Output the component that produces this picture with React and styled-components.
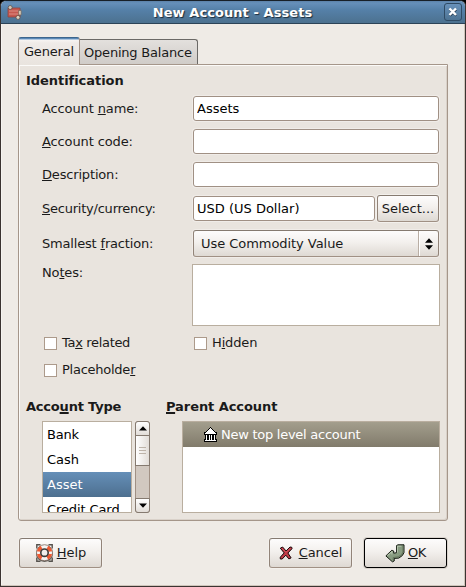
import React from 'react';
import styled, { createGlobalStyle, css } from 'styled-components';

const Global = createGlobalStyle`
  *, *::before, *::after { box-sizing: border-box; }
  html, body { margin: 0; padding: 0; background: #000; overflow: hidden; }
  body { font: 13px/16px "DejaVu Sans", sans-serif; color: #1a1a1a; }
  button, input, textarea { font: inherit; color: inherit; margin: 0; outline: none; }
`;

const Window = styled.main`
  width: 466px;
  height: 587px;
  display: flex;
  flex-direction: column;
  background: #efebe6;
  border: 1px solid #3b3331;
  border-top-color: #182028;
  border-radius: 6px 6px 0 0;
  box-shadow: inset -1px -1px 0 #cfc5bb, inset 1px 0 0 #f6f4f1;
  overflow: hidden;
`;

const TitleBar = styled.header`
  flex: none;
  height: 23px;
  display: grid;
  grid-template-columns: 26px 1fr 22px;
  align-items: center;
  padding: 0 3px 0 6px;
  background: linear-gradient(#5b81a9 0, #6690ba 2px, #5580a8 9px, #4c718f 100%);
  border-bottom: 1px solid #2c4357;
`;

const Title = styled.h1`
  margin: 0 6px 0 -2px;
  text-align: center;
  font-size: 13px;
  line-height: 16px;
  letter-spacing: 0.07px;
  color: #fff;
  text-shadow: 1px 1px 1px #1b2c3b;
  transform: translateY(1px);
`;

const CloseButton = styled.button`
  width: 18px;
  height: 18px;
  justify-self: end;
  display: grid;
  place-items: center;
  padding: 0;
  background: linear-gradient(#6891ba, #4d7393);
  border: 1px solid #2f4b65;
  border-radius: 3px;
`;

const Body = styled.div`
  flex: 1;
  padding: 12px 17px 0;
`;

const TabList = styled.div`
  display: flex;
  align-items: flex-end;
  height: 28px;
`;

const Tab = styled.button`
  display: block;
  white-space: nowrap;
  line-height: 16px;
  border: 1px solid #726b66;
  text-align: left;
  letter-spacing: -0.2px;
  ${p => p.$active ? css`
    position: relative;
    width: 62px;
    height: 28px;
    margin-bottom: -1px;
    padding: 1px 0 0 5px;
    background: linear-gradient(#4b76a1 0, #6a9bcc 1px, #f7f4f2 2px, #efebe8 5px, #e9e4de 100%);
    border-color: #3d668d #a09084 transparent #a09084;
    border-bottom: 0;
    border-radius: 3px 3px 0 0;
  ` : css`
    width: 119px;
    height: 25px;
    padding: 2px 0 0 4px;
    margin-left: -1px;
    background: linear-gradient(#e3e0dd, #d0ccc8);
    border-bottom: 0;
    border-radius: 0 3px 0 0;
    border-color: #6b6966;
  `}
`;

const Panel = styled.section`
  width: 430px;
  height: 457px;
  padding: 8px 7px 0;
  background: #e9e4de;
  border: 1px solid #a5968a;
  border-radius: 0 0 3px 3px;
  box-shadow: inset 1px 1px 0 #fbfaf8, inset -1px -1px 0 #d9d1c9;
`;

const Heading = styled.h2`
  margin: 0;
  font-size: 13px;
  line-height: 16px;
  letter-spacing: ${p => p.$spacing || 0}px;
  white-space: nowrap;
`;

const Key = styled.u`
  text-decoration: underline;
  text-decoration-thickness: ${p => p.$thick ? '2px' : '1px'};
  text-underline-offset: 1px;
  text-decoration-skip-ink: none;
`;

const Form = styled.div`
  display: flex;
  flex-direction: column;
  padding: 7px 0 0 16px;
`;

const FormRow = styled.div`
  display: grid;
  grid-template-columns: 151px 246px;
  align-items: ${p => p.$top ? 'start' : 'center'};
  height: ${p => p.$height || 25}px;
  margin-bottom: ${p => p.$gap || 0}px;
`;

const Label = styled.label`
  white-space: nowrap;
  letter-spacing: ${p => p.$spacing || 0}px;
  padding-top: ${p => p.$drop ? 1 : 0}px;
`;

const field = css`
  border: 1px solid #a09084;
  border-radius: 3px;
`;

const Entry = styled.input`
  ${field}
  width: 100%;
  min-width: 0;
  height: 25px;
  padding: 0 3px;
  background: #fff;
  box-shadow: 0 0 0 1px #f0ece8;
  color: #000;
`;

const CurrencyGroup = styled.div`
  display: grid;
  grid-template-columns: 182px 62px;
  gap: 2px;
  align-items: center;
`;

const Button = styled.button`
  ${field}
  display: flex;
  align-items: center;
  justify-content: center;
  gap: ${p => p.$gap || 0}px;
  width: ${p => p.$width}px;
  height: ${p => p.$height || 30}px;
  padding: 0;
  white-space: nowrap;
  letter-spacing: ${p => p.$spacing || 0}px;
  border-color: ${p => p.$default ? '#000' : '#857a70 #928479 #a09084'};
  background: linear-gradient(#fdfcfc 0, #f3f0ed 45%, #ded9d3 100%);
  box-shadow: ${p => p.$default ? '0 0 0 1px #d9d3cc' : '0 0 0 1px #f3f0ec'};
`;

const Combo = styled.button`
  ${field}
  display: grid;
  grid-template-columns: 1fr 20px;
  align-items: stretch;
  width: 246px;
  height: 27px;
  padding: 0;
  line-height: 25px;
  text-align: left;
  letter-spacing: -0.05px;
  border-color: #857a70 #928479 #a09084;
  background: linear-gradient(#fdfcfc 0, #f3f0ed 45%, #ded9d3 100%);
  box-shadow: 0 0 0 1px #f0ece8;
`;

const ComboText = styled.span`
  padding-left: 7px;
`;

const ComboArrows = styled.span`
  display: grid;
  place-items: center;
  border-left: 1px solid #b9aea4;
  box-shadow: inset 1px 0 0 #fff;
`;

const Notes = styled.textarea`
  display: block;
  width: 248px;
  height: 62px;
  margin-left: -1px;
  padding: 2px;
  resize: none;
  background: #fff;
  border: 1px solid #b9ae9f;
`;

const CheckGrid = styled.div`
  display: grid;
  grid-template-columns: 150px auto;
  row-gap: 11px;
  padding-left: 2px;
`;

const Check = styled.label`
  display: flex;
  align-items: center;
  gap: 5px;
  height: 16px;
  letter-spacing: ${p => p.$spacing || 0}px;
`;

const Box = styled.input`
  appearance: none;
  width: 13px;
  height: 13px;
  background: #fff;
  border: 1px solid #ac9a8b;
`;

const Pickers = styled.div`
  display: grid;
  grid-template-columns: 140px 274px;
  margin-top: 21px;
`;

const ListArea = styled.div`
  display: flex;
  gap: 3px;
  padding: 6px 0 0 16px;
`;

const List = styled.ul`
  width: ${p => p.$width}px;
  height: 92px;
  margin: 0;
  padding: 0;
  overflow: hidden;
  list-style: none;
  background: #fff;
  border: 1px solid #b9ae9f;
`;

const Item = styled.li`
  display: flex;
  align-items: center;
  gap: 4px;
  height: 25px;
  padding-left: ${p => p.$indent || 4}px;
  white-space: nowrap;
  letter-spacing: ${p => p.$spacing || 0}px;
  color: ${p => p.$tone ? '#fff' : '#000'};
  background: ${p => p.$tone === 'blue' ? 'linear-gradient(#658fb8, #4d6f8f)'
    : p.$tone === 'olive' ? 'linear-gradient(#a39e8d, #817b6b)' : 'none'};
`;

const ScrollBar = styled.div`
  display: flex;
  flex-direction: column;
  width: 15px;
  height: 92px;
  background: #d1c8c0;
  border: 1px solid #a09084;
  border-radius: 3px;
`;

const ScrollPart = styled.div`
  display: grid;
  place-items: center;
  height: ${p => p.$height}px;
  margin: ${p => p.$end ? 'auto -1px -1px' : '-1px -1px 0'};
  border: 1px solid #857a70;
  border-radius: ${p => p.$end ? '0 0 3px 3px' : p.$start ? '3px 3px 0 0' : '0'};
  background: linear-gradient(${p => p.$thumb ? '90deg, ' : ''}#fff, #e2ddd8);
`;

const Actions = styled.footer`
  display: flex;
  width: 428px;
  margin: 17px 0 0 1px;
  gap: 12px;
`;

const Spacer = styled.div`
  flex: 1;
`;

const Svg = ({ w, h, children, crisp }) => (
  <svg width={w} height={h} viewBox={`0 0 ${w} ${h}`} shapeRendering={crisp ? 'crispEdges' : 'auto'}>
    {children}
  </svg>
);

const AppIcon = () => (
  <Svg w={15} h={15}>
    <path d="M1 3h12v9H1z" fill="#c65850" stroke="#93443d" strokeWidth=".8" />
    <path d="M2 6h9M2 9h9" stroke="#dc8b80" />
    <circle cx="3.2" cy="2.5" r="2" fill="#d6c6b6" stroke="#594b42" strokeWidth=".7" />
    <circle cx="11" cy="12.4" r="2" fill="#ded2c2" stroke="#594b42" strokeWidth=".7" />
    <path d="M11.6 5.5h2.6v4.4h-2.6z" fill="#d8ccba" stroke="#706052" strokeWidth=".6" />
  </Svg>
);

const CloseIcon = () => (
  <Svg w={10} h={10}>
    <path d="M2 2.5l6.2 6.2M8.2 2.5L2 8.7" stroke="#24394c" strokeWidth="2.2" />
    <path d="M1.5 1.5l6.5 6.5M8 1.5L1.5 8" stroke="#fff" strokeWidth="2.4" />
  </Svg>
);

const ArrowsIcon = () => (
  <Svg w={8} h={12}>
    <path d="M0 4.7L4 .2l4 4.5zM0 7.2h8L4 11.7z" fill="#000" />
  </Svg>
);

const Arrow = ({ down }) => (
  <Svg w={8} h={5}>
    <path d={down ? 'M0 .5h8L4 4.7z' : 'M0 4.5h8L4 .3z'} fill="#000" />
  </Svg>
);

const Grip = () => (
  <Svg w={7} h={8} crisp>
    <path d="M0 .5h7M0 3.5h7M0 6.5h7" stroke="#bdb3a9" />
  </Svg>
);

const BankIcon = () => (
  <Svg w={13} h={15} crisp>
    <path d="M6 0h1v1h1v1h1v1h1v1h1v1h2v3h-1v4h1v3H0v-3h1V8H0V5h2V4h1V3h1V2h1V1h1z" fill="#000" />
    <path d="M6 1h1v1h1v1h1v1h1v1h1v1H2V5h1V4h1V3h1V2h1z" fill="#fff" />
    <path d="M1 6.5h11M1 13.5h11" stroke="#fff" />
    <path d="M2.5 8v5M5.5 8v5M7.5 8v5M10.5 8v5" stroke="#fff" />
  </Svg>
);

const HelpIcon = () => (
  <Svg w={19} h={20}>
    <path d="M1.8 5.5V1.8h3.7M13.5 1.8h3.7v3.7M1.8 14.5v3.7h3.7M13.5 18.2h3.7v-3.7" fill="none" stroke="#55524d" strokeWidth="1.4" />
    <circle cx="9.5" cy="10.4" r="8.5" fill="#5d5954" />
    <circle cx="9.5" cy="9.7" r="8" fill="#f6f4f2" stroke="#7d6a60" strokeWidth=".8" />
    <g fill="none" stroke="#ee5a33" strokeWidth="3.6">
      <path d="M3.6 8.5A6 6 0 0 1 6.6 4.4M12.4 4.4a6 6 0 0 1 3 4.1M15.4 11a6 6 0 0 1-3 4.1M6.6 15.1a6 6 0 0 1-3-4.1" />
    </g>
    <circle cx="9.5" cy="9.7" r="3.7" fill="#f1eeeb" stroke="#3e3b38" strokeWidth="1.6" />
  </Svg>
);

const CancelIcon = () => (
  <Svg w={14} h={14}>
    <path d="M1.3 2.2L3.6 1l3.5 4L11 1l1.8.3.2 1.4L8.9 7l3.2 4.9-2.2 1-3.1-3.7L3.2 13H1.3v-1.8l3.9-4.3z" fill="#c13a46" stroke="#160406" strokeWidth="1" />
    <path d="M3.2 2.4l3.6 4.2M11.3 2.2L7.5 6" stroke="#d9606b" strokeWidth=".7" fill="none" />
  </Svg>
);

const OkIcon = () => (
  <Svg w={20} h={19}>
    <path d="M11.5 1.6L13 .8h6v7.7l-1.6 3-3.6 2.6-4.6.3v2.6l-1.8.8L.9 11.9l6-5.7 1.8.8v2.2l2.8-.5z" fill="#879b80" stroke="#11170f" strokeWidth="1" strokeLinejoin="round" />
    <path d="M12.4 8.6V2.3h4M2.4 11.7l4.5-4v2.8" fill="none" stroke="#b3c2aa" strokeWidth="1.1" />
    <path d="M18 2v6l-1.5 2.7-3.3 2.2-5 .6v2.8" fill="none" stroke="#61735a" strokeWidth="1" />
  </Svg>
);

export default function App() {
  return (
    <>
      <Global />
      <Window>
        <TitleBar>
          <AppIcon />
          <Title>New Account - Assets</Title>
          <CloseButton aria-label="Close"><CloseIcon /></CloseButton>
        </TitleBar>
        <Body>
          <TabList role="tablist">
            <Tab $active role="tab">General</Tab>
            <Tab role="tab">Opening Balance</Tab>
          </TabList>
          <Panel>
            <Heading $spacing={-0.05}>Identification</Heading>
            <Form>
              <FormRow $gap={8}>
                <Label $spacing={-0.12}>Account <Key>n</Key>ame:</Label>
                <Entry defaultValue="Assets" />
              </FormRow>
              <FormRow $gap={8}>
                <Label $spacing={-0.12}><Key>A</Key>ccount code:</Label>
                <Entry />
              </FormRow>
              <FormRow $gap={8}>
                <Label $spacing={-0.17}><Key>D</Key>escription:</Label>
                <Entry />
              </FormRow>
              <FormRow $height={27} $gap={8}>
                <Label $spacing={-0.23}><Key>S</Key>ecurity/currency:</Label>
                <CurrencyGroup>
                  <Entry defaultValue="USD (US Dollar)" />
                  <Button $width={62} $height={27}>Select...</Button>
                </CurrencyGroup>
              </FormRow>
              <FormRow $height={27} $gap={7}>
                <Label $spacing={-0.18}>Smallest <Key>f</Key>raction:</Label>
                <Combo>
                  <ComboText>Use Commodity Value</ComboText>
                  <ComboArrows><ArrowsIcon /></ComboArrows>
                </Combo>
              </FormRow>
              <FormRow $top $height={62} $gap={9}>
                <Label $drop $spacing={-0.15}>No<Key>t</Key>es:</Label>
                <Notes />
              </FormRow>
              <CheckGrid>
                <Check $spacing={-0.32}><Box type="checkbox" /><span>Ta<Key>x</Key> related</span></Check>
                <Check $spacing={-0.15}><Box type="checkbox" /><span>H<Key>i</Key>dden</span></Check>
                <Check $spacing={-0.25}><Box type="checkbox" /><span>Placeholde<Key>r</Key></span></Check>
              </CheckGrid>
            </Form>
            <Pickers>
              <div>
                <Heading $spacing={-0.2}>Acco<Key $thick>u</Key>nt Type</Heading>
                <ListArea>
                  <List $width={90}>
                    <Item $spacing={-0.2}>Bank</Item>
                    <Item>Cash</Item>
                    <Item $tone="blue">Asset</Item>
                    <Item $spacing={-0.1}>Credit Card</Item>
                  </List>
                  <ScrollBar>
                    <ScrollPart $start $height={15}><Arrow /></ScrollPart>
                    <ScrollPart $thumb $height={31}><Grip /></ScrollPart>
                    <ScrollPart $end $height={15}><Arrow down /></ScrollPart>
                  </ScrollBar>
                </ListArea>
              </div>
              <div>
                <Heading $spacing={-0.07}><Key $thick>P</Key>arent Account</Heading>
                <ListArea>
                  <List $width={258}>
                    <Item $tone="olive" $indent={21} $spacing={-0.26}><BankIcon />New top level account</Item>
                  </List>
                </ListArea>
              </div>
            </Pickers>
          </Panel>
          <Actions>
            <Button $width={83} $gap={3}><HelpIcon /><span><Key>H</Key>elp</span></Button>
            <Spacer />
            <Button $width={83} $gap={6} $spacing={-0.05}><CancelIcon /><span><Key>C</Key>ancel</span></Button>
            <Button $width={83} $gap={3} $spacing={-0.3} $default><OkIcon /><span><Key>O</Key>K</span></Button>
          </Actions>
        </Body>
      </Window>
    </>
  );
}
